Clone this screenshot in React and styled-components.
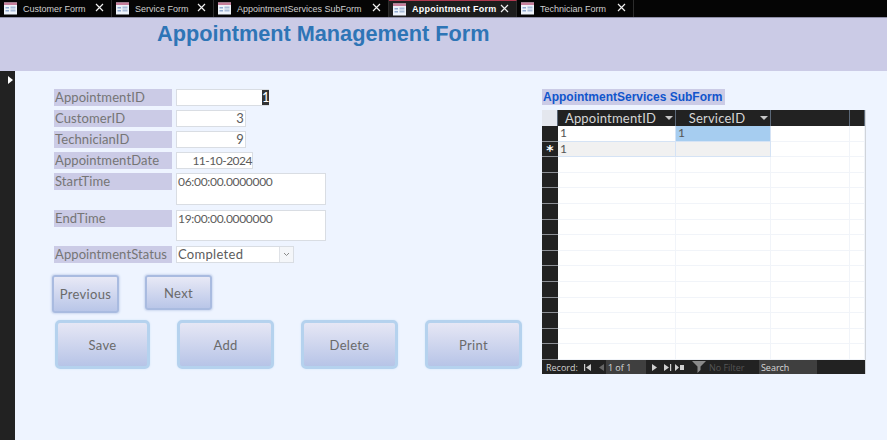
import React from 'react';
import styled, { createGlobalStyle } from 'styled-components';

const formFont = `Lato, "Open Sans", sans-serif`;

const GlobalStyle = createGlobalStyle`
  html, body { margin: 0; padding: 0; height: 440px; overflow: hidden; background: #eef4ff; }
  * { box-sizing: border-box; }
`;

const Page = styled.div`
  width: 887px;
  height: 440px;
  display: flex;
  flex-direction: column;
  font-family: ${formFont};
`;

/* tab strip */
const TabBar = styled.div`
  height: 17px;
  background: #050505;
  display: flex;
`;
const Tab = styled.div`
  width: ${p => p.$w}px;
  height: 17px;
  padding-left: 4px;
  display: flex;
  align-items: center;
  border-right: 1px solid #2c2c2c;
  background: ${p => (p.$active ? '#1d1d1d' : '#050505')};
  border-top: ${p => (p.$active ? '1px solid #b0384f' : 'none')};
  position: relative;
`;
const TabLabel = styled.span`
  margin-left: 6px;
  font: ${p => (p.$active ? 700 : 400)} 9px "Liberation Sans", Arial, sans-serif;
  letter-spacing: ${p => (p.$active ? '0.25px' : '0')};
  color: ${p => (p.$active ? '#ffffff' : '#cfcfcf')};
  white-space: nowrap;
`;
const TabClose = styled.svg`
  position: absolute;
  right: 7px;
  top: 3px;
  width: 9px;
  height: 9px;
`;

const FormIcon = () => (
  <svg width="13" height="13" viewBox="0 0 13 13">
    <rect x="0" y="0.5" width="13" height="12" fill="#eef3fa" />
    <rect x="0" y="0.5" width="13" height="2.5" fill="#c77f9b" />
    <rect x="1.500" y="5" width="3.500" height="1.500" fill="#8fa9cf" />
    <rect x="1.500" y="8" width="3.500" height="1.500" fill="#8fa9cf" />
    <rect x="6.500" y="4.500" width="5" height="2" fill="#a9bcd8" />
    <rect x="6.500" y="7.500" width="5" height="2" fill="#a9bcd8" />
  </svg>
);

const Header = styled.div`
  height: 54px;
  background: #cbcbe6;
  border-top: 1px solid #8f8fa8;
  padding: 3px 0 0 157px;
`;
const Title = styled.h1`
  margin: 0;
  font: 700 21.700px "Liberation Sans", Arial, sans-serif;
  color: #2e75b6;
`;

const Main = styled.div`
  flex: 1;
  display: flex;
  background: #eef4ff;
`;
const Selector = styled.div`
  width: 15px;
  background: #222222;
  padding: 5px 0 0 8px;
`;
const Arrow = styled.div`
  width: 0;
  height: 0;
  border-left: 5px solid #ffffff;
  border-top: 4px solid transparent;
  border-bottom: 4px solid transparent;
`;

const FormColumn = styled.div`
  width: 527px;
  padding: 18px 0 0 39px;
`;
const Row = styled.div`
  display: flex;
  align-items: flex-start;
  gap: 4px;
  margin-bottom: ${p => p.$gap ?? 4}px;
`;
const Label = styled.div`
  width: 118px;
  height: 17px;
  line-height: 16px;
  padding-left: 1px;
  background: #cbcbe6;
  color: #757575;
  font-size: 13px;
  letter-spacing: 0.1px;
  white-space: nowrap;
`;
const Field = styled.div`
  width: ${p => p.$w}px;
  height: ${p => p.$h ?? 17}px;
  line-height: 15px;
  background: #ffffff;
  border: 1px solid #d9dde3;
  color: #5c5c5c;
  font-size: ${p => p.$size ?? 13}px;
  letter-spacing: ${p => p.$spacing ?? 0.3}px;
  padding: 0 ${p => p.$pr ?? 1}px 0 1px;
  text-align: ${p => p.$align ?? 'left'};
  position: relative;
`;
const SelectedValue = styled.span`
  position: absolute;
  right: -1px;
  top: 0;
  height: 15px;
  width: 7px;
  background: #333333;
  color: #ffffff;
  text-align: center;
`;
const DropButton = styled.span`
  position: absolute;
  right: 0;
  top: 0;
  width: 14px;
  height: 15px;
  background: #f4f6f9;
  border-left: 1px solid #dfe2e7;
  display: flex;
  align-items: center;
  justify-content: center;
`;

const NavRow = styled.div`
  display: flex;
  align-items: flex-start;
  gap: 26px;
  margin: 12px 0 0 -2px;
`;
const NavButton = styled.div`
  width: 67px;
  height: ${p => p.$h}px;
  padding-top: ${p => p.$top}px;
  text-align: center;
  font-size: 13px;
  letter-spacing: 0.3px;
  color: #6a6a6a;
  background: linear-gradient(#e8e9f6, #b9c6e8);
  border: 2px solid #a9bbe0;
  border-radius: 3px;
  box-shadow: 0 0 2px 1px #cdd9f0;
`;
const ActionRow = styled.div`
  display: flex;
  gap: 27px;
  margin: 7px 0 0 1px;
`;
const ActionButton = styled.div`
  width: ${p => p.$w ?? 97}px;
  height: 49px;
  line-height: 44px;
  text-align: center;
  font-size: 13px;
  letter-spacing: 0.3px;
  color: #6a6a6a;
  background: linear-gradient(#e6e7f5, #b7c4e7);
  border: 3px solid #b5d2ee;
  border-radius: 5px;
  box-shadow: 0 0 2px #cfe2f5;
`;

/* subform */
const SubColumn = styled.div`
  width: 324px;
  padding-top: 18px;
`;
const SubTitle = styled.div`
  width: fit-content;
  height: 16px;
  padding: 0 3px 0 1px;
  background: #cbcbe6;
  color: #1155cc;
  font: 700 12px/16px "Liberation Sans", Arial, sans-serif;
`;
const Sheet = styled.div`
  margin-top: 5px;
  height: 264px;
  display: flex;
  flex-direction: column;
  border-right: 1px solid #d0d4da;
  background: #ffffff;
`;
const gridCols = '16px 118px 95px 79px 1fr';
const SheetHead = styled.div`
  height: 16px;
  flex: none;
  display: grid;
  grid-template-columns: ${gridCols};
  background: #222222;
`;
const HeadCell = styled.div`
  position: relative;
  padding-right: 12px;
  text-align: center;
  line-height: 16px;
  border-right: 1px solid #5b6878;
  color: #d6d6d6;
  font-size: 13px;
  letter-spacing: 0.2px;
  background: ${p => (p.$corner ? '#e4e7ee' : 'transparent')};
`;
const SortMark = styled.span`
  position: absolute;
  right: 2px;
  top: 6px;
  border-top: 4px solid #c8c8c8;
  border-left: 4px solid transparent;
  border-right: 4px solid transparent;
`;
const SheetBody = styled.div`
  flex: 1;
  min-height: 0;
  display: grid;
  grid-template-rows: repeat(15, minmax(0, 1fr));
`;
const SheetRow = styled.div`
  display: grid;
  min-height: 0;
  grid-template-columns: ${gridCols};
`;
const SheetCell = styled.div`
  min-height: 0;
  border-right: 1px solid ${p => (p.$strong ? '#d5e3f5' : '#f1f4f9')};
  border-bottom: 1px solid ${p => (p.$strong ? '#d5e3f5' : '#f1f4f9')};
  background: ${p => p.$bg ?? '#ffffff'};
  color: #555555;
  font-size: 12px;
  line-height: 14px;
  padding-left: 2px;
`;
const RowHead = styled.div`
  min-height: 0;
  background: #222222;
  border-bottom: 1px solid #8d9096;
  color: #ffffff;
  font: 700 14px/17px "DejaVu Sans", sans-serif;
  text-align: center;
  overflow: hidden;
`;
const RecordBar = styled.div`
  height: 14px;
  flex: none;
  background: #222222;
  display: flex;
  align-items: center;
  padding-left: 4px;
  color: #cfcfcf;
  font: 400 9px "Open Sans", sans-serif;
`;
const NavIcon = styled.svg`
  width: ${p => p.$w ?? 9}px;
  height: ${p => p.$hgt ?? 9}px;
  margin-left: ${p => p.$ml ?? 4}px;
  flex: none;
`;
const RecordBox = styled.div`
  width: ${p => p.$w}px;
  height: 14px;
  line-height: 15px;
  margin-left: ${p => p.$ml}px;
  padding-left: 2px;
  background: #3f3f3f;
  color: #d8d8d8;
`;
const NoFilter = styled.span`
  margin-left: 2px;
  color: #555555;
  width: 49px;
`;

const tabs = [
  ['Customer Form', 112],
  ['Service Form', 102],
  ['AppointmentServices SubForm', 175],
  ['Appointment Form', 128, true],
  ['Technician Form', 117],
];

const NavGlyph = ({ d, color = '#cfcfcf', ml }) => (
  <NavIcon $ml={ml} viewBox="0 0 9 9"><path d={d} fill={color} /></NavIcon>
);

const Button = ({ children, h, top }) => <NavButton $h={h} $top={top}>{children}</NavButton>;

export default function App() {
  return (
    <Page>
      <GlobalStyle />
      <TabBar>
        {tabs.map(([name, w, active]) => (
          <Tab key={name} $w={w} $active={active}>
            <FormIcon />
            <TabLabel $active={active}>{name}</TabLabel>
            <TabClose viewBox="0 0 9 9">
              <path d="M1 1 L8 8 M8 1 L1 8" stroke="#f0f0f0" strokeWidth="1.2" />
            </TabClose>
          </Tab>
        ))}
      </TabBar>
      <Header>
        <Title>Appointment Management Form</Title>
      </Header>
      <Main>
        <Selector><Arrow /></Selector>
        <FormColumn>
          <Row>
            <Label>AppointmentID</Label>
            <Field $w={93}><SelectedValue>1</SelectedValue></Field>
          </Row>
          <Row>
            <Label>CustomerID</Label>
            <Field $w={70} $align="right" $pr={1}>3</Field>
          </Row>
          <Row>
            <Label>TechnicianID</Label>
            <Field $w={70} $align="right" $pr={1}>9</Field>
          </Row>
          <Row>
            <Label>AppointmentDate</Label>
            <Field $w={77} $align="right" $pr={0} $size={12} $spacing={-0.5}>11-10-2024</Field>
          </Row>
          <Row $gap={5}>
            <Label>StartTime</Label>
            <Field $w={150} $h={32} $size={12} $spacing={-0.3}>06:00:00.0000000</Field>
          </Row>
          <Row $gap={5}>
            <Label>EndTime</Label>
            <Field $w={150} $h={31} $size={12} $spacing={-0.3}>19:00:00.0000000</Field>
          </Row>
          <Row $gap={0}>
            <Label>AppointmentStatus</Label>
            <Field $w={118}>
              Completed
              <DropButton>
                <svg width="7" height="5" viewBox="0 0 7 5">
                  <path d="M1 1 L3.5 3.5 L6 1" fill="none" stroke="#8a8a8a" />
                </svg>
              </DropButton>
            </Field>
          </Row>
          <NavRow>
            <Button h={38} top={9}>Previous</Button>
            <Button h={35} top={8}>Next</Button>
          </NavRow>
          <ActionRow>
            <ActionButton $w={95}>Save</ActionButton>
            <ActionButton>Add</ActionButton>
            <ActionButton>Delete</ActionButton>
            <ActionButton>Print</ActionButton>
          </ActionRow>
        </FormColumn>
        <SubColumn>
          <SubTitle>AppointmentServices SubForm</SubTitle>
          <Sheet>
            <SheetHead>
              <HeadCell $corner />
              <HeadCell>AppointmentID<SortMark /></HeadCell>
              <HeadCell>ServiceID<SortMark /></HeadCell>
              <HeadCell />
              <HeadCell />
            </SheetHead>
            <SheetBody>
              {Array.from({ length: 15 }, (_, i) => (
                <SheetRow key={i}>
                  <RowHead>{i === 1 ? '*' : ''}</RowHead>
                  <SheetCell $strong={i < 2} $bg={i === 1 ? '#f1f1f1' : undefined}>{i < 2 ? '1' : ''}</SheetCell>
                  <SheetCell $strong={i < 2} $bg={i === 0 ? '#a6cdf0' : i === 1 ? '#f1f1f1' : undefined}>{i === 0 ? '1' : ''}</SheetCell>
                  <SheetCell />
                  <SheetCell />
                </SheetRow>
              ))}
            </SheetBody>
            <RecordBar>
              Record:
              <NavGlyph ml={5} d="M1 1h1.2v7H1z M8 1v7L3 4.500z" />
              <NavGlyph ml={5} color="#666666" d="M7 1v7L2 4.500z" />
              <RecordBox $w={40} $ml={0}>1 of 1</RecordBox>
              <NavGlyph ml={4} d="M2 1v7l5-3.500z" />
              <NavGlyph ml={4} d="M1 1v7l5-3.500z M7 1h1.200v7H7z" />
              <NavGlyph ml={3} d="M0 1v7l4-3.500z M5 2h4v5H5z" />
              <NavIcon $ml={7} $w={16} $hgt={14} viewBox="0 0 16 14">
                <path d="M1 1h14L9.500 6.500V10L6.500 13V6.500z" fill="#8a8a8a" />
              </NavIcon>
              <NoFilter>No Filter</NoFilter>
              <RecordBox $w={58} $ml={1}>Search</RecordBox>
            </RecordBar>
          </Sheet>
        </SubColumn>
      </Main>
    </Page>
  );
}
